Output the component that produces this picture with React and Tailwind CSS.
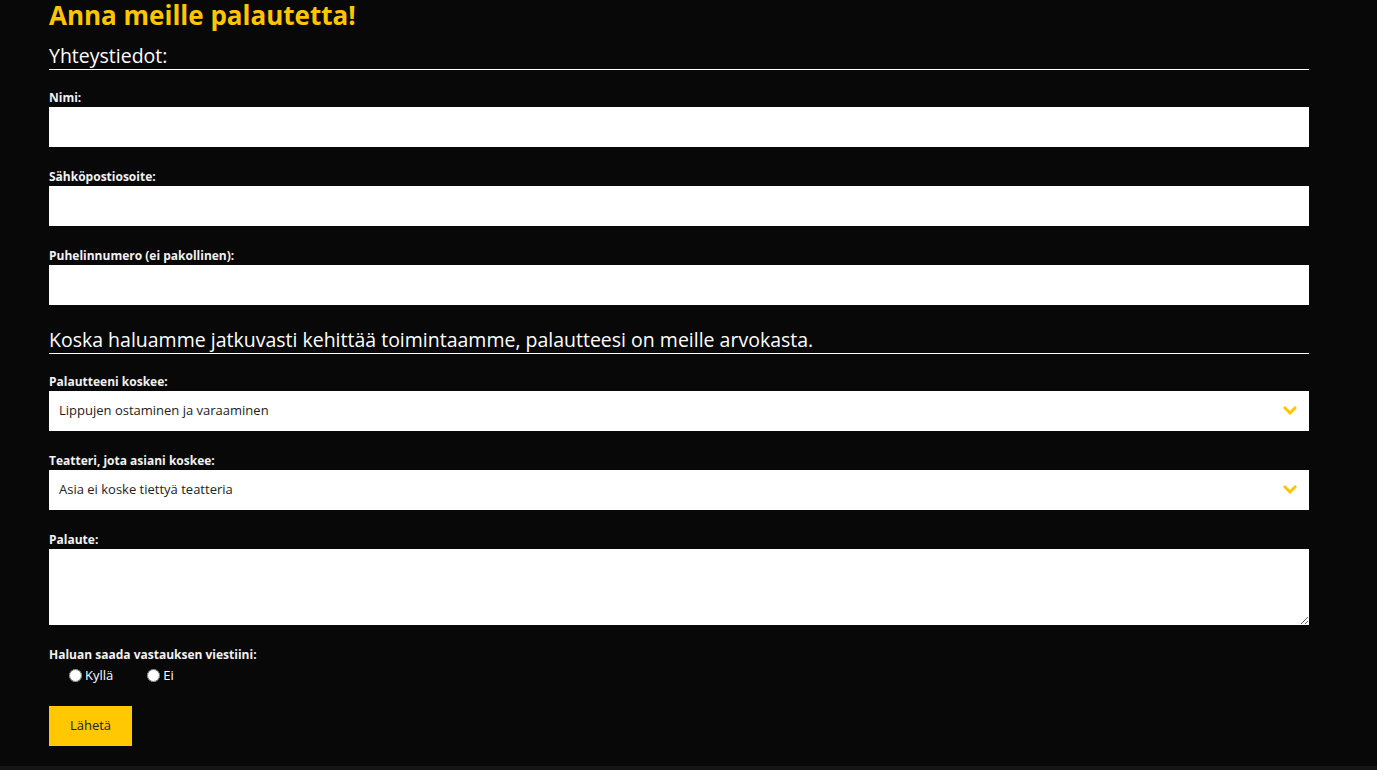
import React, { useState } from "react";

const font = { fontFamily: '"Open Sans", "Liberation Sans", sans-serif' };

const Chevron = () => (
  <svg width="14" height="10" viewBox="0 0 14 10" className="absolute right-[12px] top-1/2 -translate-y-1/2 pointer-events-none">
    <polyline points="2,2 7,7 12,2" fill="none" stroke="#ffc600" strokeWidth="3" strokeLinecap="square" />
  </svg>
);

const Field = ({ label, children, first }) => (
  <div className={first ? "mt-[20px]" : "mt-[22px]"}>
    <label className="block text-[12px] leading-[15px] font-bold text-[#f2f2f2] mb-[2px]">{label}</label>
    {children}
  </div>
);

const SelectBox = ({ value }) => (
  <div className="relative h-[40px] bg-white flex items-center pl-[10px] text-[13px] text-[#222]">
    {value}
    <Chevron />
  </div>
);

export default function App() {
  const [reply, setReply] = useState("");

  return (
    <div className="w-full bg-[#080808]" style={font}>
      <div className="min-h-[766px] px-[49px] w-[1358px]">
        <h1 className="text-[26px] leading-[30px] font-bold text-[#ffc600] whitespace-nowrap">Anna meille palautetta!</h1>

        <h2 className="mt-[12px] text-[19.5px] leading-[27px] text-white border-b border-white w-[1260px]">Yhteystiedot:</h2>

        <div className="w-[1260px]">
          <Field label="Nimi:" first>
            <input className="block w-full h-[40px] bg-white outline-none" />
          </Field>
          <Field label="Sähköpostiosoite:">
            <input className="block w-full h-[40px] bg-white outline-none" />
          </Field>
          <Field label="Puhelinnumero (ei pakollinen):">
            <input className="block w-full h-[40px] bg-white outline-none" />
          </Field>

          <h2 className="mt-[21px] text-[19.5px] leading-[27px] text-white border-b border-white">
            Koska haluamme jatkuvasti kehittää toimintaamme, palautteesi on meille arvokasta.
          </h2>

          <Field label="Palautteeni koskee:" first>
            <SelectBox value="Lippujen ostaminen ja varaaminen" />
          </Field>
          <Field label="Teatteri, jota asiani koskee:">
            <SelectBox value="Asia ei koske tiettyä teatteria" />
          </Field>
          <Field label="Palaute:">
            <textarea className="block w-full h-[76px] bg-white outline-none resize-y" />
          </Field>

          <div className="mt-[22px]">
            <div className="text-[12px] leading-[15px] font-bold text-[#f2f2f2]">Haluan saada vastauksen viestiini:</div>
            <div className="flex items-center pl-[20px] mt-[4px] text-[13px] text-white">
              <label className="flex items-center gap-[3px] mr-[34px]">
                <input type="radio" name="reply" checked={reply === "k"} onChange={() => setReply("k")} className="m-0 w-[13px] h-[13px]" />
                Kyllä
              </label>
              <label className="flex items-center gap-[3px]">
                <input type="radio" name="reply" checked={reply === "e"} onChange={() => setReply("e")} className="m-0 w-[13px] h-[13px]" />
                Ei
              </label>
            </div>
          </div>

          <button className="mt-[20px] w-[83px] h-[40px] bg-[#ffc800] text-[13px] text-[#222]">Lähetä</button>
        </div>
      </div>
      <div className="h-[4px] bg-[#141414]" />
    </div>
  );
}
